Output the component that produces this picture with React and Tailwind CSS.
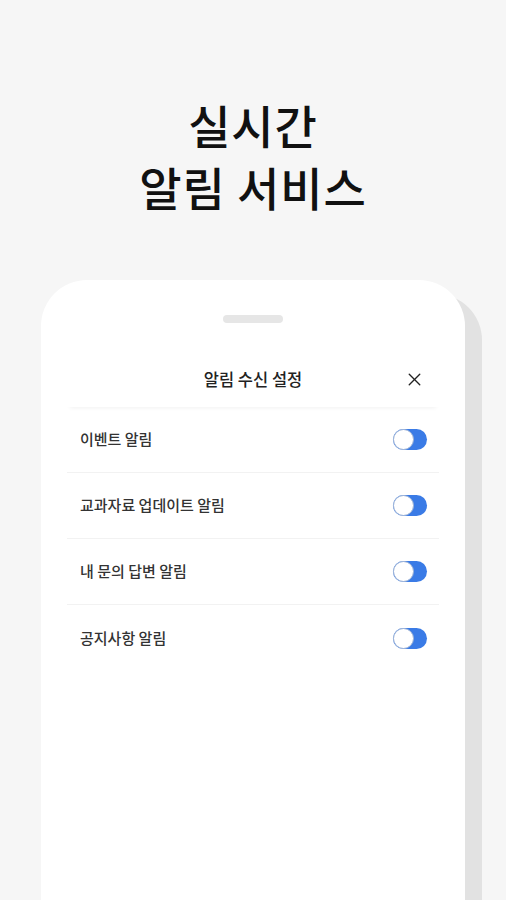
import { X } from 'lucide-react';

const items = ['이벤트 알림', '교과자료 업데이트 알림', '내 문의 답변 알림', '공지사항 알림'];

function Toggle() {
  return (
    <div className="relative h-[21px] w-[34px] rounded-full bg-[#3a7be6]">
      <div className="absolute left-0 top-0 h-[21px] w-[21px] rounded-full border border-[#9fb4d6] bg-white" />
    </div>
  );
}

export default function App() {
  return (
    <div
      className="h-[900px] w-[506px] overflow-hidden bg-[#f6f6f6]"
      style={{ fontFamily: '"Noto Sans CJK KR", "Noto Sans", sans-serif' }}
    >
      <h1 className="pt-[93px] text-center text-[46px] font-medium leading-[62px] tracking-[0.02em] text-[#111]">
        실시간
        <br />
        알림 서비스
      </h1>

      <div className="mx-[41px] mt-[63px] h-[700px] rounded-t-[46px] bg-white shadow-[17px_14px_0_#e2e2e2]">
        <div className="flex justify-center pt-[35px]">
          <div className="h-[8px] w-[60px] rounded-full bg-[#e6e6e6]" />
        </div>

        <div className="mx-[26px] mt-[29px]">
          <div className="relative flex h-[55px] items-center justify-center shadow-[0_4px_4px_-3px_rgba(0,0,0,0.06)]">
            <span className="text-[16.5px] font-medium text-[#222]">알림 수신 설정</span>
            <X className="absolute right-[14px] h-[21px] w-[21px] text-[#222]" strokeWidth={1.6} />
          </div>

          {items.map((label, i) => (
            <div
              key={label}
              className={`flex h-[66px] items-center justify-between pl-[13px] pr-[12px] ${
                i < items.length - 1 ? 'border-b border-[#f2f2f2]' : ''
              }`}
            >
              <span className="text-[15px] font-medium text-[#333]">{label}</span>
              <Toggle />
            </div>
          ))}
        </div>
      </div>
    </div>
  );
}
